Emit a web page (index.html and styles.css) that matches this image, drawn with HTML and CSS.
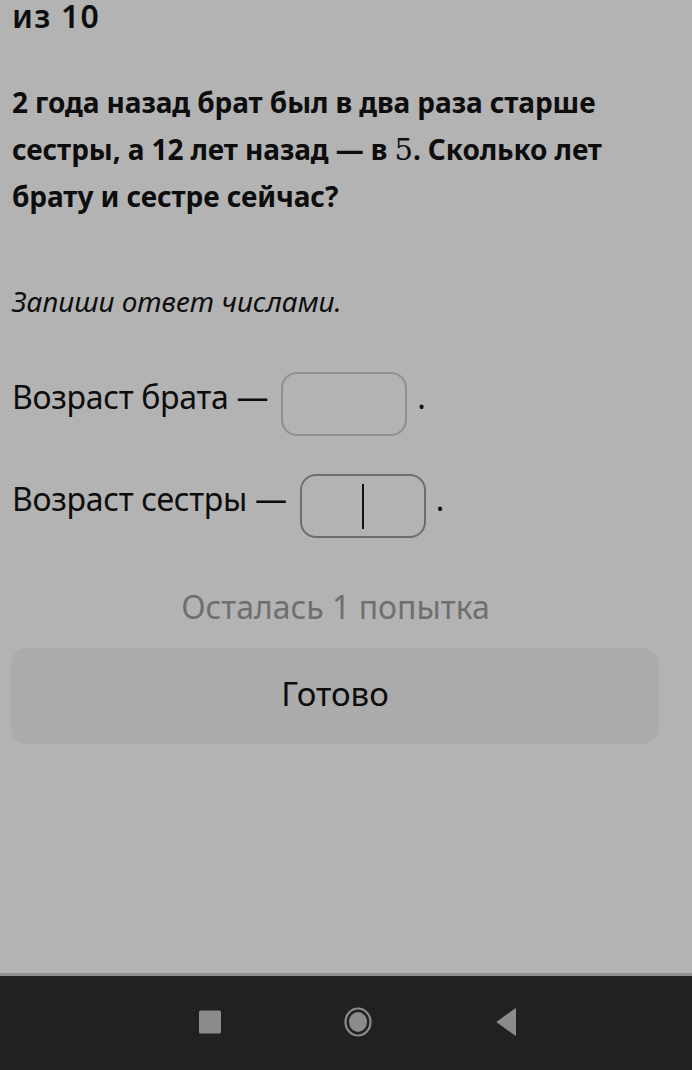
FILE: index.html
```html
<!DOCTYPE html>
<html lang="ru">
<head>
<meta charset="utf-8">
<link rel="stylesheet" href="styles.css">
</head>
<body>
<div class="screen">
  <main class="page">
    <div class="counter">из 10</div>
    <p class="question">2 года назад брат был в два раза старше сестры, а 12 лет назад — в <span class="math">5</span>. Сколько лет брату и сестре сейчас?</p>
    <p class="hint">Запиши ответ числами.</p>
    <div class="answer-row">
      <span class="label">Возраст брата —</span>
      <span class="field"></span>
      <span class="dot">.</span>
    </div>
    <div class="answer-row answer-row-next">
      <span class="label">Возраст сестры —</span>
      <span class="field field-active"><span class="caret"></span></span>
      <span class="dot">.</span>
    </div>
    <div class="attempts">Осталась 1 попытка</div>
    <div class="done">Готово</div>
  </main>
  <nav class="navbar">
    <span class="nav-item"><svg width="24" height="24" viewBox="0 0 24 24"><rect x="1" y="0.5" width="22" height="23" rx="1.5" fill="#8b8b8b"/></svg></span>
    <span class="nav-item"><svg width="30" height="30" viewBox="0 0 30 30"><ellipse cx="15" cy="15" rx="12.5" ry="13.5" fill="none" stroke="#8b8b8b" stroke-width="2.2"/><ellipse cx="15" cy="15" rx="9" ry="10" fill="#8b8b8b"/></svg></span>
    <span class="nav-item"><svg width="26" height="30" viewBox="0 0 26 30"><path d="M23 2 L23 28 Q23 29 22 28.5 L4 15.5 Q3 15 4 14.5 L22 1.5 Q23 1 23 2 Z" fill="#8b8b8b"/></svg></span>
  </nav>
</div>
</body>
</html>
```
FILE: styles.css
```css
html, body {
  margin: 0;
  padding: 0;
}
body {
  background: #b3b3b3;
  color: #0d0d0d;
  font-family: "Noto Sans", "Open Sans", sans-serif;
}
.screen {
  height: 1070px;
  display: flex;
  flex-direction: column;
}
.page {
  flex: 1;
  padding: 0 33px 0 12px;
}
.counter {
  font-size: 32px;
  font-weight: 600;
  line-height: 32px;
  letter-spacing: 1.2px;
}
.question {
  margin: 47px 0 0;
  font-size: 28px;
  font-weight: 700;
  line-height: 47px;
  letter-spacing: -0.1px;
}
.math {
  font-family: "DejaVu Serif", "Liberation Serif", serif;
  font-weight: 400;
  font-size: 29px;
  line-height: 1;
}
.hint {
  margin: 61px 0 0;
  font-size: 28px;
  font-style: italic;
  line-height: 40px;
}
.answer-row {
  display: flex;
  align-items: flex-start;
  margin-top: 51px;
  font-size: 32px;
  line-height: 40px;
}
.answer-row-next {
  margin-top: 38px;
}
.label {
  white-space: nowrap;
  margin-top: 5px;
  letter-spacing: -0.3px;
}
.field {
  box-sizing: border-box;
  width: 126px;
  height: 64px;
  margin-left: 13px;
  border: 2px solid #8e8e8e;
  border-radius: 16px;
  display: flex;
  align-items: center;
  justify-content: center;
}
.field-active {
  border-color: #6e6e6e;
}
.caret {
  width: 2px;
  height: 45px;
  background: #111;
}
.dot {
  margin: 5px 0 0 10px;
}
.attempts {
  margin-top: 49px;
  text-align: center;
  color: #6f6f6f;
  font-size: 32px;
  line-height: 40px;
}
.done {
  margin: 21px 0 0 -1px;
  height: 96px;
  border-radius: 16px;
  background: #ababab;
  display: flex;
  align-items: center;
  justify-content: center;
  font-size: 33px;
  line-height: 40px;
  padding-bottom: 4px;
  box-sizing: border-box;
}
.navbar {
  height: 97px;
  background: #212123;
  border-top: 3px solid #8f8f8f;
  box-sizing: border-box;
  display: flex;
  justify-content: center;
  align-items: center;
  gap: 100px;
  padding-left: 24px;
  padding-bottom: 2px;
}
.nav-item {
  width: 48px;
  height: 48px;
  display: flex;
  align-items: center;
  justify-content: center;
}
```
